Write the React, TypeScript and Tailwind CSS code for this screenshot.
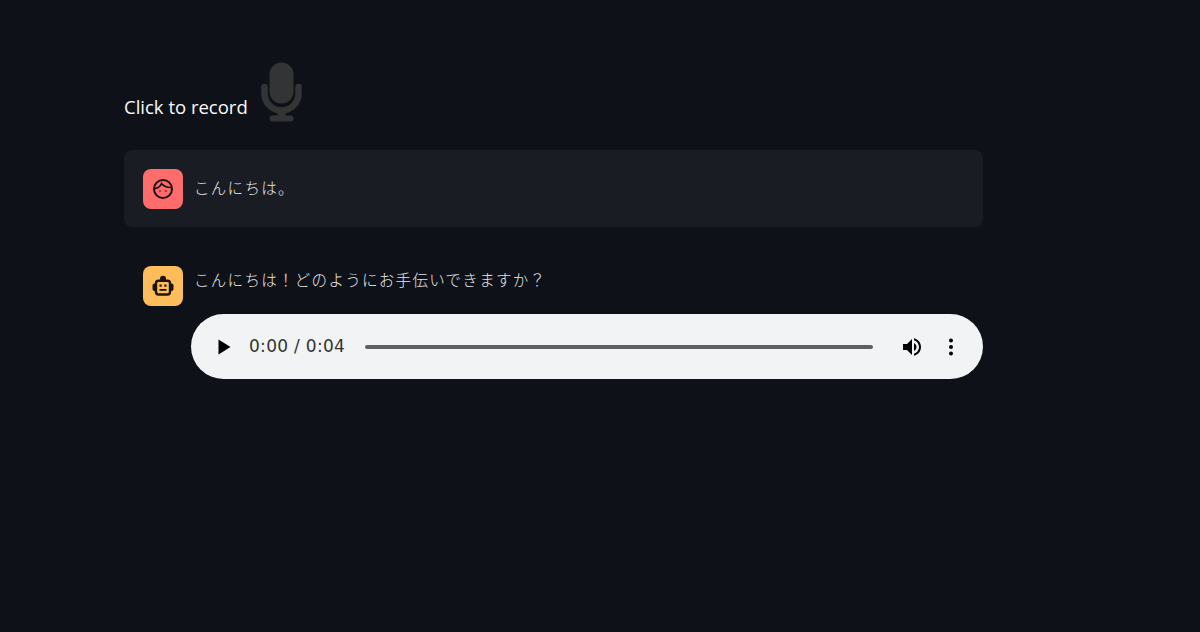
function Mic() {
  return (
    <svg width="41" height="60" viewBox="0 0 41 60" fill="#333436" className="ml-[13px] shrink-0">
      <rect x="8.500" y="0.500" width="24" height="41" rx="12" />
      <path d="M3.500 25v6.500a17 17 0 0 0 34 0V25" fill="none" stroke="#333436" strokeWidth="6.500" strokeLinecap="round" />
      <rect x="16.500" y="48" width="8" height="8" />
      <rect x="8.500" y="53.500" width="24" height="6" rx="3" />
    </svg>
  );
}

function Face() {
  return (
    <svg width="22" height="22" viewBox="0 0 22 22" fill="none" stroke="#1a0f14" strokeWidth="2">
      <circle cx="11" cy="11" r="9" />
      <path d="M3 10.500C6.500 10 8.500 8 9.500 5.500 11.500 8 14.500 9.500 19 9.500" strokeWidth="1.700" />
      <circle cx="8" cy="13" r="1.100" fill="#a02f3a" stroke="none" />
      <circle cx="14" cy="13" r="1.100" fill="#a02f3a" stroke="none" />
    </svg>
  );
}

function Robot() {
  return (
    <svg width="22" height="22" viewBox="0 0 22 22">
      <circle cx="11" cy="3.800" r="3" fill="#1c1408" />
      <rect x="0.500" y="8.500" width="4" height="7.500" rx="2" fill="#1c1408" />
      <rect x="17.500" y="8.500" width="4" height="7.500" rx="2" fill="#1c1408" />
      <rect x="4" y="5.800" width="14" height="13.700" rx="2.500" fill="#fdbd5b" stroke="#1c1408" strokeWidth="2.400" />
      <rect x="7.500" y="9.500" width="2.200" height="2.200" fill="#1c1408" />
      <rect x="12.300" y="9.500" width="2.200" height="2.200" fill="#1c1408" />
      <rect x="7.500" y="14" width="7" height="1.800" fill="#1c1408" />
    </svg>
  );
}

function AudioBar() {
  return (
    <div className="ml-[67px] mt-2 h-[65px] rounded-[33px] bg-[#f1f3f4] flex items-center pl-[27px] pr-[29px]">
      <svg width="13" height="16" viewBox="0 0 13 16" className="shrink-0">
        <path d="M0.500 0.500L12.500 8L0.500 15.500Z" fill="#000" />
      </svg>
      <span className="ml-[18px] text-[17px] leading-none tracking-[0.300px] text-[#333333] font-['DejaVu_Sans',sans-serif] font-normal whitespace-nowrap w-[96px]">
        0:00 / 0:04
      </span>
      <div className="ml-5 h-1 flex-1 rounded-full bg-[#5f6061]" />
      <svg width="24" height="24" viewBox="0 0 24 24" className="ml-[27px] shrink-0">
        <path d="M3 9v6h4l5 5V4L7 9H3z" fill="#000" />
        <path d="M14 3.230v2.060c2.890.860 5 3.540 5 6.710s-2.110 5.850-5 6.710v2.060c4.010-.910 7-4.490 7-8.770s-2.990-7.860-7-8.770zM16.500 12c0-1.770-1.020-3.290-2.500-4.030v8.050c1.480-.730 2.500-2.250 2.500-4.020z" fill="#000" />
      </svg>
      <svg width="6" height="18" viewBox="0 0 6 18" className="ml-6 shrink-0">
        <circle cx="3" cy="2.500" r="2" fill="#000" />
        <circle cx="3" cy="9" r="2" fill="#000" />
        <circle cx="3" cy="15.500" r="2" fill="#000" />
      </svg>
    </div>
  );
}

const jp = "font-['Noto_Sans_CJK_JP','Noto_Sans',sans-serif] font-light text-[15.5px] text-[#e4e5e8] tracking-[1.300px] leading-6";

export default function App() {
  return (
    <div className="min-h-[632px] bg-[#0e1117] pl-[124px] pr-[217px] pt-[62px] font-['Open_Sans',sans-serif]">
      <div className="flex items-end h-[60px]">
        <span className="text-[18.500px] leading-[26px] mb-[2px] text-[#fafafa] whitespace-nowrap">Click to record</span>
        <Mic />
      </div>
      <div className="mt-7 h-[77px] rounded-lg bg-[#1a1c24] flex items-center pl-[19px] pr-[19px] gap-3">
        <div className="w-10 h-10 rounded-lg bg-[#ff6c6c] flex items-center justify-center shrink-0">
          <Face />
        </div>
        <p className={jp + " -mt-[3px] -ml-[1px]"}>こんにちは。</p>
      </div>
      <div className="mt-[39px]">
        <div className="flex px-[19px] gap-3">
          <div className="w-10 h-10 rounded-lg bg-[#fdbd5b] flex items-center justify-center shrink-0">
            <Robot />
          </div>
          <p className={jp + " mt-[1px] -ml-[1px]"}>こんにちは！どのようにお手伝いできますか？</p>
        </div>
        <AudioBar />
      </div>
    </div>
  );
}
